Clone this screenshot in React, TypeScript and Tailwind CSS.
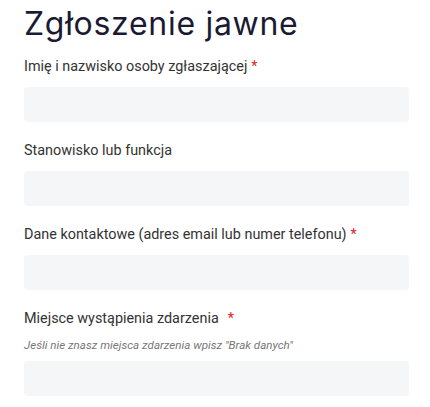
import React from "react";

function Field({ label, required, hint, wide }: { label: string; required?: boolean; hint?: string; wide?: boolean }) {
  return (
    <div className="flex flex-col">
      <label className="text-[14.4px] leading-[20px] text-[#333333]">
        {label}
        {required && <span className={`text-[#e2231a] ${wide ? "ml-[9px]" : "ml-[4px]"}`}>*</span>}
      </label>
      {hint && <div className="mt-[8px] text-[11.6px] leading-[16px] italic text-[#777777]">{hint}</div>}
      <div className={`${hint ? "mt-[8px]" : "mt-[10px]"} h-[35px] w-[385px] rounded-[4px] bg-[#f5f6f7]`} />
    </div>
  );
}

export default function App() {
  return (
    <div className="min-h-[407px] bg-white px-[24px] pt-[2px]" style={{ fontFamily: "Roboto, 'Liberation Sans', sans-serif" }}>
      <h1 className="text-[32px] leading-[44px] font-normal text-[#1b1a33] tracking-[0.7px]" style={{ fontFamily: "Inter, 'Noto Sans', sans-serif" }}>
        Zgłoszenie jawne
      </h1>
      <div className="mt-[11px] flex flex-col gap-[19px]">
        <Field label="Imię i nazwisko osoby zgłaszającej" required />
        <Field label="Stanowisko lub funkcja" />
        <Field label="Dane kontaktowe (adres email lub numer telefonu)" required />
        <Field label="Miejsce wystąpienia zdarzenia" required wide hint={'Jeśli nie znasz miejsca zdarzenia wpisz "Brak danych"'} />
      </div>
    </div>
  );
}
